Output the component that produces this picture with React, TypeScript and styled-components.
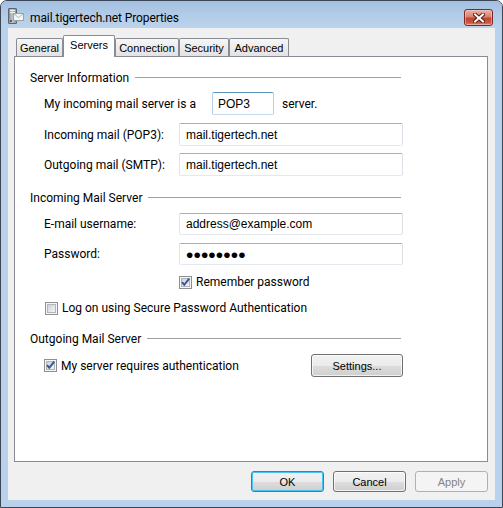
import React from 'react';
import styled, { createGlobalStyle, css } from 'styled-components';

const UI_FONT = `Roboto, "Noto Sans", sans-serif`;
const CLASSIC_FONT = `"Liberation Sans", Arial, sans-serif`;

const GlobalStyle = createGlobalStyle`
    html, body {
        margin: 0;
        padding: 0;
        background: #ffffff;
    }
    * {
        box-sizing: border-box;
    }
`;

const Window = styled.div`
    width: 503px;
    height: 508px;
    display: flex;
    flex-direction: column;
    border: 1px solid #3b4757;
    border-radius: 7px 7px 0 0;
    background: #b9d1ea;
    overflow: hidden;
`;

const TitleBar = styled.div`
    height: 27px;
    flex: none;
    display: flex;
    align-items: flex-start;
    padding: 7px 9px 0 7px;
    background: linear-gradient(to bottom, #a3c0e1 0%, #b3cce8 55%, #bcd3eb 100%);
`;

const TitleText = styled.div`
    margin: 2px 0 0 6px;
    font-family: ${UI_FONT};
    font-size: 12px;
    line-height: 16px;
    letter-spacing: -0.1px;
    color: #000;
`;

const CloseButton = styled.div`
    margin: 1px 0 0 auto;
    width: 29px;
    height: 17px;
    display: flex;
    align-items: center;
    justify-content: center;
    border: 1px solid #7b2a20;
    border-radius: 3px;
    background: linear-gradient(to bottom, #e8b1a8 0%, #d78374 45%, #c4432f 55%, #cc5744 85%, #e0917f 100%);
    box-shadow: inset 0 0 0 1px rgba(255, 220, 210, 0.45);
`;

const Client = styled.div`
    flex: 1;
    margin: 0 7px 7px 7px;
    display: flex;
    flex-direction: column;
    padding: 7px 7px 0 6px;
    background: #f0f0f0;
`;

const TabStrip = styled.div`
    height: 21px;
    display: flex;
    align-items: flex-end;
    padding-left: 2px;
`;

const Tab = styled.div<{ $w: number; $active?: boolean }>`
    width: ${(p) => p.$w}px;
    height: 18px;
    display: flex;
    align-items: center;
    justify-content: center;
    border: 1px solid #898c95;
    border-bottom: none;
    border-radius: 2px 2px 0 0;
    font-family: ${CLASSIC_FONT};
    font-size: 11px;
    color: #000;
    background: linear-gradient(to bottom, #f6f6f6 0%, #ececec 50%, #e3e3e3 100%);

    ${(p) =>
        p.$active &&
        css`
            height: 22px;
            margin-bottom: -1px;
            padding-bottom: 3px;
            position: relative;
            z-index: 1;
            background: #ffffff;
        `}
`;

const Panel = styled.div`
    height: 406px;
    flex: none;
    display: flex;
    flex-direction: column;
    border: 1px solid #898c95;
    background: #ffffff;
    padding: 13px 84px 0 15px;
`;

const GroupHeader = styled.div<{ $mt: number }>`
    height: 16px;
    margin-top: ${(p) => p.$mt}px;
    display: flex;
    align-items: center;
    font-family: ${UI_FONT};
    font-size: 12px;
    color: #000;

    &::after {
        content: '';
        flex: 1;
        height: 1px;
        margin: 0 2px 2px 6px;
        background: #a0a0a0;
    }
`;

const Row = styled.div<{ $mt: number; $h: number; $indent?: number }>`
    height: ${(p) => p.$h}px;
    margin-top: ${(p) => p.$mt}px;
    padding-left: ${(p) => p.$indent ?? 14}px;
    display: flex;
    align-items: center;
    font-family: ${UI_FONT};
    font-size: 12px;
    color: #000;
`;

const Label = styled.div<{ $w: number }>`
    width: ${(p) => p.$w}px;
    flex: none;
`;

const Trailing = styled.div`
    margin-left: 8px;
`;

const Field = styled.div<{ $w: number; $focus?: boolean }>`
    width: ${(p) => p.$w}px;
    height: 100%;
    display: flex;
    align-items: center;
    padding-left: 6px;
    border: 1px solid;
    border-color: #abadb3 #dbdfe6 #e3e9ef #e2e3ea;
    border-radius: 2px;
    background: #ffffff;
    font-family: ${CLASSIC_FONT};
    font-size: 12px;
    color: #000;

    ${(p) =>
        p.$focus &&
        css`
            border-color: #5c93bc #b5cfe7 #c3d9ee #b5cfe7;
            padding-left: 5px;
        `}
`;

const Dots = styled.span`
    font-size: 21px;
    letter-spacing: 0.1px;
    line-height: 1;
    margin-top: 1px;
`;

const CheckRow = styled.label`
    display: flex;
    align-items: center;
    gap: 4px;
`;

const Button = styled.div<{ $w: number; $h: number; $variant?: 'default' | 'disabled' }>`
    width: ${(p) => p.$w}px;
    height: ${(p) => p.$h}px;
    display: flex;
    align-items: center;
    justify-content: center;
    border: 1px solid #707070;
    border-radius: 3px;
    background: linear-gradient(to bottom, #f2f2f2 0%, #ebebeb 50%, #dddddd 51%, #cfcfcf 100%);
    box-shadow: inset 0 0 0 1px rgba(255, 255, 255, 0.7);
    font-family: ${CLASSIC_FONT};
    font-size: 11px;
    color: #000;

    ${(p) =>
        p.$variant === 'default' &&
        css`
            border-color: #3c7fb1;
            box-shadow: inset 0 0 0 1px #49c3f3;
        `}

    ${(p) =>
        p.$variant === 'disabled' &&
        css`
            border-color: #adb2b5;
            background: #f4f4f4;
            box-shadow: none;
            color: #838383;
        `}
`;

const SettingsButton = styled(Button)`
    margin-left: auto;
`;

const ButtonBar = styled.div`
    margin-top: 9px;
    display: flex;
    justify-content: flex-end;
    gap: 9px;
`;

const MailIcon = () => (
    <svg width="16" height="16" viewBox="0 0 16 16">
        <defs>
            <linearGradient id="tower" x1="0" y1="0" x2="1" y2="0">
                <stop offset="0" stopColor="#7f868e" />
                <stop offset="0.45" stopColor="#c4c9cf" />
                <stop offset="1" stopColor="#8a9098" />
            </linearGradient>
        </defs>
        <rect x="0.5" y="0.5" width="8" height="15" rx="0.5" fill="url(#tower)" stroke="#5f656d" />
        <path d="M2 2.5h5M2 4.5h5" stroke="#eef1f4" />
        <rect x="2" y="12" width="2" height="2" fill="#5c6168" />
        <rect x="5.5" y="5.5" width="10" height="7" fill="#f4f6f5" stroke="#9aa1a8" />
        <path d="M5.5 5.5 L10.5 9.5 L15.5 5.5" fill="none" stroke="#9fc39b" />
    </svg>
);

const CloseGlyph = () => (
    <svg width="12" height="10" viewBox="0 0 12 10">
        <path d="M2 1.5 L10 8.5 M10 1.5 L2 8.5" stroke="#5a1b12" strokeWidth="4" strokeLinecap="square" />
        <path d="M2 1.5 L10 8.5 M10 1.5 L2 8.5" stroke="#ffffff" strokeWidth="2" strokeLinecap="square" />
    </svg>
);

const CheckBox = ({ checked }: { checked?: boolean }) => (
    <svg width="13" height="13" viewBox="0 0 13 13" style={{ flex: 'none' }}>
        <defs>
            <linearGradient id="cbfill" x1="0" y1="0" x2="1" y2="1">
                <stop offset="0" stopColor="#c9ced6" />
                <stop offset="1" stopColor="#f7f7f7" />
            </linearGradient>
        </defs>
        <rect x="0.5" y="0.5" width="12" height="12" fill="#f6f6f6" stroke="#8e8f8f" />
        <rect x="2.5" y="2.5" width="8" height="8" fill="url(#cbfill)" stroke="#b0b5bb" />
        {checked && (
            <path d="M3 6.2 L5.3 8.8 L10.2 2.6" fill="none" stroke="#3a559a" strokeWidth="2" />
        )}
    </svg>
);

const tabs = [
    { label: 'General', w: 47 },
    { label: 'Servers', w: 52, active: true },
    { label: 'Connection', w: 64 },
    { label: 'Security', w: 50 },
    { label: 'Advanced', w: 60 },
];

const App: React.FC = () => {
    return (
        <>
            <GlobalStyle />
            <Window>
                <TitleBar>
                    <MailIcon />
                    <TitleText>mail.tigertech.net Properties</TitleText>
                    <CloseButton>
                        <CloseGlyph />
                    </CloseButton>
                </TitleBar>
                <Client>
                    <TabStrip>
                        {tabs.map((t) => (
                            <Tab key={t.label} $w={t.w} $active={t.active}>
                                {t.label}
                            </Tab>
                        ))}
                    </TabStrip>
                    <Panel>
                        <GroupHeader $mt={0}>Server Information</GroupHeader>
                        <Row $mt={6} $h={23}>
                            <Label $w={168}>My incoming mail server is a</Label>
                            <Field $w={62} $focus>POP3</Field>
                            <Trailing>server.</Trailing>
                        </Row>
                        <Row $mt={8} $h={23}>
                            <Label $w={135}>Incoming mail (POP3):</Label>
                            <Field $w={224}>mail.tigertech.net</Field>
                        </Row>
                        <Row $mt={7} $h={23}>
                            <Label $w={135}>Outgoing mail (SMTP):</Label>
                            <Field $w={224}>mail.tigertech.net</Field>
                        </Row>

                        <GroupHeader $mt={14}>Incoming Mail Server</GroupHeader>
                        <Row $mt={7} $h={22}>
                            <Label $w={135}>E-mail username:</Label>
                            <Field $w={224}>address@example.com</Field>
                        </Row>
                        <Row $mt={8} $h={22}>
                            <Label $w={135}>Password:</Label>
                            <Field $w={224}>
                                <Dots>••••••••</Dots>
                            </Field>
                        </Row>
                        <Row $mt={9} $h={16} $indent={149}>
                            <CheckRow>
                                <CheckBox checked />
                                Remember password
                            </CheckRow>
                        </Row>
                        <Row $mt={10} $h={16} $indent={15}>
                            <CheckRow>
                                <CheckBox />
                                Log on using Secure Password Authentication
                            </CheckRow>
                        </Row>

                        <GroupHeader $mt={15}>Outgoing Mail Server</GroupHeader>
                        <Row $mt={7} $h={23}>
                            <CheckRow>
                                <CheckBox checked />
                                My server requires authentication
                            </CheckRow>
                            <SettingsButton $w={92} $h={23}>Settings...</SettingsButton>
                        </Row>
                    </Panel>
                    <ButtonBar>
                        <Button $w={73} $h={21} $variant="default">OK</Button>
                        <Button $w={73} $h={21}>Cancel</Button>
                        <Button $w={73} $h={21} $variant="disabled">Apply</Button>
                    </ButtonBar>
                </Client>
            </Window>
        </>
    );
};

export default App;
